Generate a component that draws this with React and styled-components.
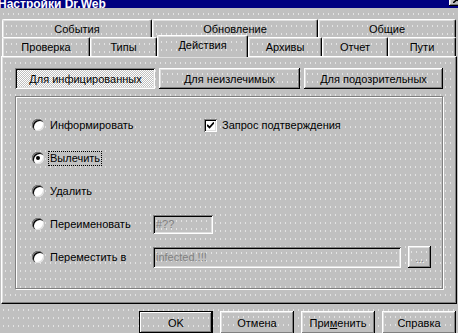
import styled, { createGlobalStyle, css } from "styled-components";

const GlobalStyle = createGlobalStyle`
  html, body { margin: 0; padding: 0; background: #c0c0c0; }
  body {
    font-family: "Liberation Sans", Arial, sans-serif;
    font-size: 11px;
    color: #000;
  }
  * { box-sizing: border-box; }
`;

// faint dither dots seen on the grey surfaces
const surface = css`
  background-color: #c0c0c0;
  background-image: radial-gradient(circle, rgba(255, 255, 255, 0.55) 0.6px, transparent 0.9px);
  background-size: 5px 8px;
  background-position: 1px 2px;
`;

const raised = css`
  box-shadow: inset -1px -1px #000, inset 1px 1px #fff, inset -2px -2px #808080,
    inset 2px 2px #dfdfdf;
`;

const sunken = css`
  box-shadow: inset 1px 1px #808080, inset -1px -1px #fff, inset 2px 2px #000,
    inset -2px -2px #dfdfdf;
`;

const Window = styled.div`
  ${surface};
  width: 458px;
  height: 333px;
  overflow: hidden;
  display: flex;
  flex-direction: column;
`;

const TitleBar = styled.div`
  height: 8px;
  flex: none;
  background: #000080;
  display: flex;
  align-items: flex-end;
  justify-content: space-between;
  overflow: hidden;
`;

const Title = styled.span`
  color: #fff;
  font-weight: bold;
  font-size: 12px;
  line-height: 12px;
  margin-bottom: -2px;
  margin-left: -2px;
  white-space: nowrap;
`;

const CloseButton = styled.div`
  width: 16px;
  height: 14px;
  flex: none;
  margin-right: -7px;
  margin-bottom: 2px;
  background: #c0c0c0;
  ${raised};
  display: flex;
  align-items: center;
  justify-content: center;
`;

const TabRow = styled.div`
  display: flex;
  align-items: flex-end;
  padding-left: 2px;
  flex: none;
  height: ${(p) => p.$height}px;
  margin-top: ${(p) => p.$top}px;
`;

const Tab = styled.div`
  ${surface};
  width: ${(p) => p.$w}px;
  height: ${(p) => (p.$active ? 22 : p.$h)}px;
  margin-bottom: ${(p) => (p.$active ? -1 : 0)}px;
  padding-bottom: ${(p) => (p.$active ? 3 : 0)}px;
  position: ${(p) => (p.$active ? "relative" : "static")};
  z-index: ${(p) => (p.$active ? 1 : "auto")};
  border-top: 1px solid #fff;
  border-left: 1px solid #fff;
  border-right: 1px solid #000;
  border-radius: 2px 2px 0 0;
  box-shadow: inset -1px 0 #808080, inset 1px 1px #dfdfdf;
  display: flex;
  align-items: center;
  justify-content: center;
  white-space: nowrap;
`;

const Panel = styled.div`
  ${surface};
  flex: none;
  height: 248px;
  margin: 0 1px;
  border: 1px solid;
  border-color: #fff #000 #000 #fff;
  box-shadow: inset -1px -1px #808080, inset 1px 1px #dfdfdf;
  padding: 11px 12px 0 13px;
`;

const SubTabs = styled.div`
  display: flex;
  gap: 4px;
`;

const SubButton = styled.div`
  width: ${(p) => p.$w}px;
  height: 21px;
  display: flex;
  align-items: center;
  justify-content: center;
  white-space: nowrap;
  ${(p) =>
    p.$pressed
      ? css`
          background-color: #c0c0c0;
          background-image: conic-gradient(#fff 25%, #c0c0c0 0 50%, #fff 0 75%, #c0c0c0 0);
          background-size: 2px 2px;
          ${sunken};
          padding: 1px 0 0 1px;
        `
      : css`
          ${surface};
          ${raised};
        `}
`;

const Group = styled.div`
  margin-top: 7px;
  width: 428px;
  height: 193px;
  border: 1px solid #808080;
  box-shadow: 1px 1px 0 #fff, inset 1px 1px 0 #fff;
  padding: 17px 0 0 16px;
  display: flex;
  flex-direction: column;
  gap: 11px;
`;

const OptionRow = styled.div`
  display: grid;
  grid-template-columns: 121px 1fr;
  align-items: center;
  height: 22px;
`;

const Choice = styled.label`
  display: flex;
  align-items: center;
  gap: 4px;
  white-space: nowrap;
`;

const Radio = styled.span`
  width: 12px;
  height: 12px;
  flex: none;
  border-radius: 50%;
  background: #fff;
  box-shadow: inset 1px 1px #808080, inset 2px 2px #000, inset -1px -1px #dfdfdf;
  display: flex;
  align-items: center;
  justify-content: center;

  &::after {
    content: "";
    width: 4px;
    height: 4px;
    border-radius: 50%;
    background: ${(p) => (p.$checked ? "#000" : "transparent")};
  }
`;

const Caption = styled.span`
  padding: 0 1px;
  line-height: 13px;
  border: 1px dotted ${(p) => (p.$focus ? "#000" : "transparent")};
`;

const CheckChoice = styled(Choice)`
  margin-left: 51px;
  gap: 3px;
`;

const CheckBox = styled.span`
  width: 13px;
  height: 13px;
  flex: none;
  background: #fff;
  ${sunken};
  display: flex;
  align-items: center;
  justify-content: center;
`;

const Field = styled.div`
  width: ${(p) => p.$w}px;
  height: ${(p) => p.$h}px;
  ${surface};
  ${sunken};
  color: #808080;
  padding: 0 3px;
  display: flex;
  align-items: center;
`;

const FieldLine = styled.div`
  display: flex;
  align-items: center;
  gap: 7px;
`;

const BrowseButton = styled.div`
  width: 23px;
  height: 22px;
  ${surface};
  ${raised};
  color: #808080;
  text-shadow: 1px 1px #fff;
  display: flex;
  align-items: center;
  justify-content: center;
  font-size: 10px;
  line-height: 10px;
  padding-top: 4px;
`;

const Footer = styled.div`
  display: flex;
  justify-content: flex-end;
  gap: 7px;
  padding: 7px 2px 0 0;
`;

const Button = styled.div`
  width: 74px;
  height: 23px;
  flex: none;
  ${surface};
  display: flex;
  align-items: center;
  justify-content: center;
  ${(p) =>
    p.$default
      ? css`
          border: 1px solid #000;
          box-shadow: inset -1px -1px #000, inset 1px 1px #fff, inset -2px -2px #808080;
        `
      : raised};
`;

const Underline = styled.u`
  text-decoration: underline;
  text-underline-offset: 1px;
`;

const topTabs = [
  { label: "События", w: 150 },
  { label: "Обновление", w: 166 },
  { label: "Общие", w: 138 },
];

const frontTabs = [
  { label: "Проверка", w: 88 },
  { label: "Типы", w: 67 },
  { label: "Действия", w: 91, active: true },
  { label: "Архивы", w: 74 },
  { label: "Отчет", w: 66 },
  { label: "Пути", w: 68 },
];

function RadioChoice({ label, checked, focus }) {
  return (
    <Choice>
      <Radio $checked={checked} />
      <Caption $focus={focus}>{label}</Caption>
    </Choice>
  );
}

export default function App() {
  return (
    <>
      <GlobalStyle />
      <Window>
        <TitleBar>
          <Title>Настройки Dr.Web</Title>
          <CloseButton>
            <svg width="8" height="7" viewBox="0 0 8 7">
              <path d="M0 0 L8 7 M8 0 L0 7" stroke="#000" strokeWidth="1.6" />
            </svg>
          </CloseButton>
        </TitleBar>

        <TabRow $height={18} $top={11}>
          {topTabs.map((t) => (
            <Tab key={t.label} $w={t.w} $h={18}>
              {t.label}
            </Tab>
          ))}
        </TabRow>
        <TabRow $height={21} $top={-2}>
          {frontTabs.map((t) => (
            <Tab key={t.label} $w={t.w} $h={19} $active={t.active}>
              {t.label}
            </Tab>
          ))}
        </TabRow>

        <Panel>
          <SubTabs>
            <SubButton $w={140} $pressed>
              Для инфицированных
            </SubButton>
            <SubButton $w={141}>Для неизлечимых</SubButton>
            <SubButton $w={139}>Для подозрительных</SubButton>
          </SubTabs>

          <Group>
            <OptionRow>
              <RadioChoice label="Информировать" />
              <CheckChoice>
                <CheckBox>
                  <svg width="7" height="7" viewBox="0 0 7 7">
                    <path d="M0 3 L2.5 5.5 L7 0.5" stroke="#000" strokeWidth="1.8" fill="none" />
                  </svg>
                </CheckBox>
                <Caption>Запрос подтверждения</Caption>
              </CheckChoice>
            </OptionRow>
            <OptionRow>
              <RadioChoice label="Вылечить" checked focus />
            </OptionRow>
            <OptionRow>
              <RadioChoice label="Удалить" />
            </OptionRow>
            <OptionRow>
              <RadioChoice label="Переименовать" />
              <Field $w={60} $h={19}>
                #??
              </Field>
            </OptionRow>
            <OptionRow>
              <RadioChoice label="Переместить в" />
              <FieldLine>
                <Field $w={248} $h={21}>
                  infected.!!!
                </Field>
                <BrowseButton>...</BrowseButton>
              </FieldLine>
            </OptionRow>
          </Group>
        </Panel>

        <Footer>
          <Button $default>OK</Button>
          <Button>Отмена</Button>
          <Button>
            <span>
              При<Underline>м</Underline>енить
            </span>
          </Button>
          <Button>Справка</Button>
        </Footer>
      </Window>
    </>
  );
}
